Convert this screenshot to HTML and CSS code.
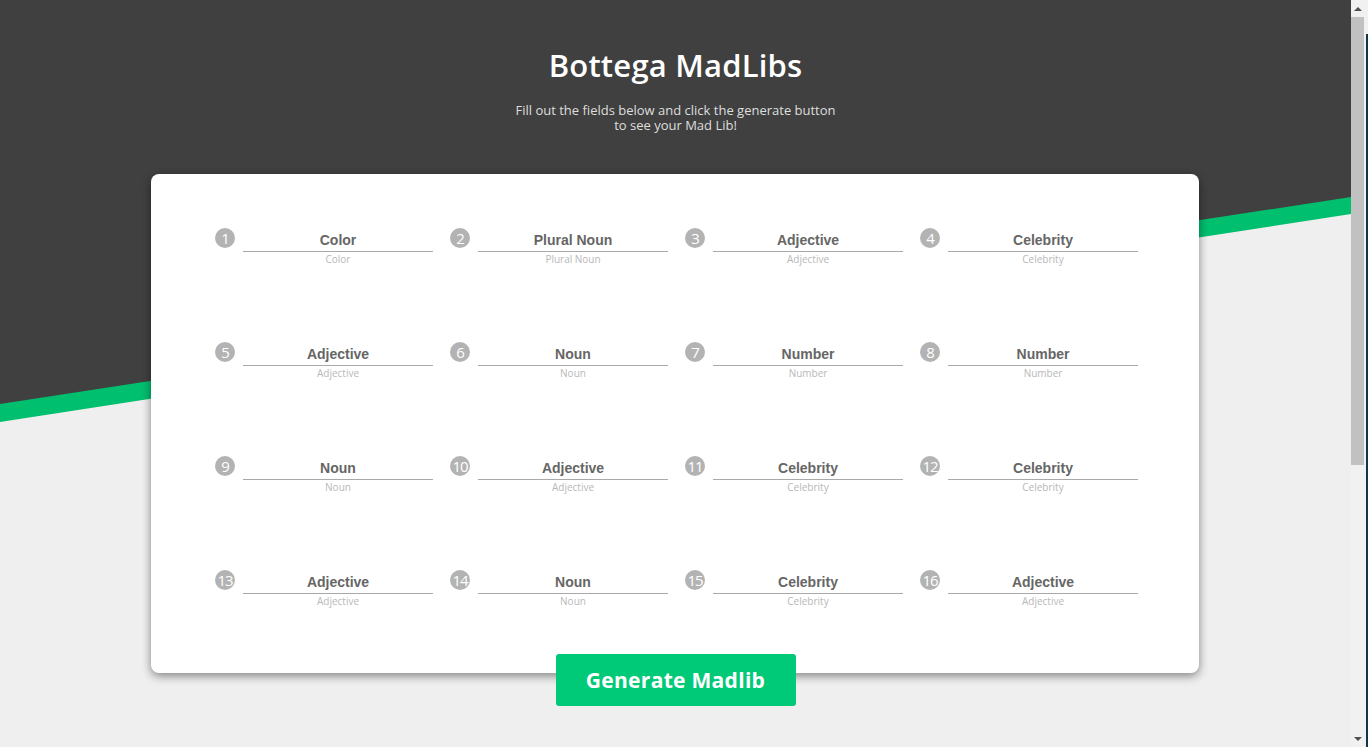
FILE: index.html
```html
<!DOCTYPE html>
<html lang="en">
<head>
<meta charset="utf-8">
<title>Bottega MadLibs</title>
<link rel="stylesheet" href="styles.css">
</head>
<body>
<div class="page">
  <div class="hero-bg"></div>
  <div class="content">
    <header class="header">
      <h1 class="title">Bottega MadLibs</h1>
      <p class="subtitle">Fill out the fields below and click the generate button to see your Mad Lib!</p>
    </header>
    <form class="card">
      <div class="grid">
        <div class="cell"><span class="num">1</span><div class="field"><div class="value">Color</div><div class="hint">Color</div></div></div>
        <div class="cell"><span class="num">2</span><div class="field"><div class="value">Plural Noun</div><div class="hint">Plural Noun</div></div></div>
        <div class="cell"><span class="num">3</span><div class="field"><div class="value">Adjective</div><div class="hint">Adjective</div></div></div>
        <div class="cell"><span class="num">4</span><div class="field"><div class="value">Celebrity</div><div class="hint">Celebrity</div></div></div>
        <div class="cell"><span class="num">5</span><div class="field"><div class="value">Adjective</div><div class="hint">Adjective</div></div></div>
        <div class="cell"><span class="num">6</span><div class="field"><div class="value">Noun</div><div class="hint">Noun</div></div></div>
        <div class="cell"><span class="num">7</span><div class="field"><div class="value">Number</div><div class="hint">Number</div></div></div>
        <div class="cell"><span class="num">8</span><div class="field"><div class="value">Number</div><div class="hint">Number</div></div></div>
        <div class="cell"><span class="num">9</span><div class="field"><div class="value">Noun</div><div class="hint">Noun</div></div></div>
        <div class="cell"><span class="num">10</span><div class="field"><div class="value">Adjective</div><div class="hint">Adjective</div></div></div>
        <div class="cell"><span class="num">11</span><div class="field"><div class="value">Celebrity</div><div class="hint">Celebrity</div></div></div>
        <div class="cell"><span class="num">12</span><div class="field"><div class="value">Celebrity</div><div class="hint">Celebrity</div></div></div>
        <div class="cell"><span class="num">13</span><div class="field"><div class="value">Adjective</div><div class="hint">Adjective</div></div></div>
        <div class="cell"><span class="num">14</span><div class="field"><div class="value">Noun</div><div class="hint">Noun</div></div></div>
        <div class="cell"><span class="num">15</span><div class="field"><div class="value">Celebrity</div><div class="hint">Celebrity</div></div></div>
        <div class="cell"><span class="num">16</span><div class="field"><div class="value">Adjective</div><div class="hint">Adjective</div></div></div>
      </div>
    </form>
    <button class="generate" type="button">Generate Madlib</button>
  </div>
</div>
<div class="scrollbar" aria-hidden="true">
  <div class="sb-arrow sb-up"></div>
  <div class="sb-track"><div class="sb-thumb"></div></div>
  <div class="sb-arrow sb-down"></div>
</div>
</body>
</html>
```

FILE: styles.css
```css
html, body {
  margin: 0;
  padding: 0;
}

body {
  background: #efefef;
  font-family: "Open Sans", "Noto Sans", sans-serif;
  overflow-x: hidden;
}

.page {
  position: relative;
  margin-right: 17px;
  min-height: 1190px;
}

.hero-bg {
  position: absolute;
  top: 0;
  left: 0;
  right: 0;
  height: 422px;
  background: #00bf6f;
  clip-path: polygon(0 0, 100% 0, 100% 214px, 0 422px);
}
.hero-bg::before {
  content: "";
  position: absolute;
  inset: 0;
  background: #404040;
  clip-path: polygon(0 0, 100% 0, 100% 197px, 0 404px);
}

.content {
  position: relative;
  z-index: 1;
  display: flex;
  flex-direction: column;
  align-items: center;
}

.header {
  display: flex;
  flex-direction: column;
  align-items: center;
  padding-top: 44px;
}

.title {
  margin: 0;
  color: #ffffff;
  font-size: 31px;
  line-height: 42px;
  font-weight: 600;
  letter-spacing: 0.2px;
}

.subtitle {
  margin: 17px 0 0;
  width: 326px;
  color: #dedede;
  font-size: 13px;
  line-height: 15px;
  text-align: center;
}

.card {
  margin: 41px 1px 0 0;
  width: 1048px;
  box-sizing: border-box;
  padding: 55px 61px 66px 64px;
  background: #ffffff;
  border-radius: 8px;
  box-shadow: 0 3px 10px rgba(0, 0, 0, 0.45);
}

.grid {
  display: grid;
  grid-template-columns: repeat(4, 218px);
  column-gap: 17px;
  row-gap: 78px;
}

.cell {
  display: flex;
  align-items: flex-start;
  gap: 8px;
}

.num {
  flex: none;
  width: 20px;
  height: 20px;
  margin-top: -1px;
  border-radius: 50%;
  background: #b3b3b3;
  color: #ffffff;
  font-size: 15px;
  line-height: 20px;
  text-align: center;
  letter-spacing: -1px;
}

.field {
  width: 190px;
  display: flex;
  flex-direction: column;
}

.value {
  height: 22px;
  border-bottom: 1px solid #a9a9a9;
  font-family: "Liberation Sans", Arial, sans-serif;
  font-weight: 700;
  font-size: 14px;
  line-height: 22px;
  color: #666666;
  text-align: center;
}

.hint {
  margin-top: 1px;
  font-size: 10px;
  line-height: 12px;
  color: #b8b8b8;
  text-align: center;
}

.generate {
  position: relative;
  margin-top: -19px;
  width: 240px;
  height: 52px;
  border: none;
  border-radius: 3px;
  background: #00c977;
  color: #ffffff;
  font-family: "Open Sans", "Noto Sans", sans-serif;
  font-size: 21px;
  font-weight: 700;
  letter-spacing: 0.3px;
  cursor: pointer;
}

/* window scrollbar, drawn over the right edge */
.scrollbar {
  position: fixed;
  top: 0;
  right: 0;
  bottom: 0;
  width: 17px;
  display: flex;
  flex-direction: column;
  background: #f1f1f1;
  z-index: 10;
}
.scrollbar::after {
  content: "";
  position: absolute;
  top: 34px;
  right: 0;
  bottom: 0;
  width: 2px;
  background: #14344a;
}
.sb-arrow {
  flex: none;
  height: 17px;
  display: flex;
  align-items: center;
  justify-content: center;
  padding-right: 3px;
}
.sb-up::before,
.sb-down::before {
  content: "";
  width: 0;
  height: 0;
  border-left: 4px solid transparent;
  border-right: 4px solid transparent;
}
.sb-up::before {
  border-bottom: 4px solid #505050;
}
.sb-down::before {
  border-top: 4px solid #505050;
}
.sb-track {
  flex: 1;
  padding-right: 4px;
}
.sb-thumb {
  height: 448px;
  background: #c1c1c1;
}
```
